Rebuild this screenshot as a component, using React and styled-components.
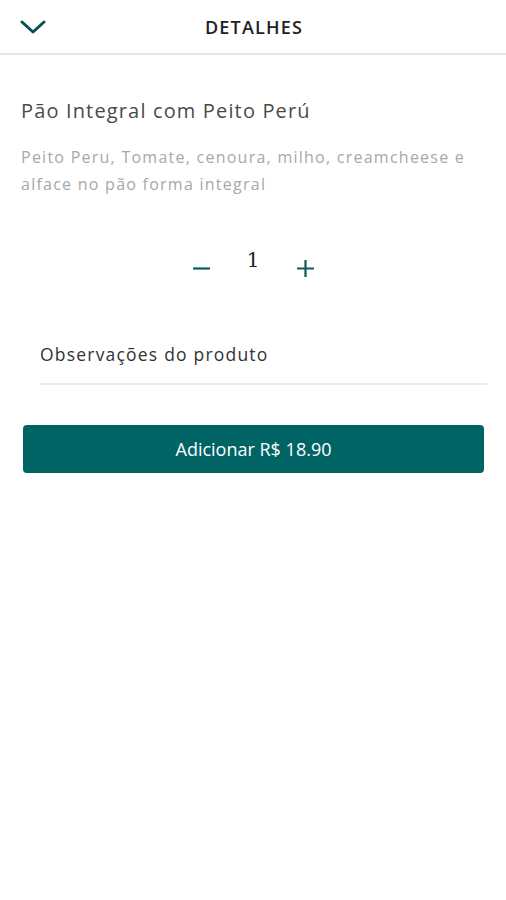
import React, { useState } from "react";
import styled, { createGlobalStyle } from "styled-components";

const GlobalStyle = createGlobalStyle`
  html, body {
    margin: 0;
    padding: 0;
    background: #ffffff;
    font-family: "Open Sans", "Noto Sans", sans-serif;
  }
`;

const Page = styled.div`
  width: 506px;
  min-height: 900px;
  background: #ffffff;
`;

const Header = styled.header`
  position: relative;
  height: 53px;
  display: flex;
  align-items: center;
  justify-content: center;
  border-bottom: 2px solid #e6e6e6;
`;

const BackButton = styled.button`
  position: absolute;
  left: 18px;
  top: 16px;
  width: 30px;
  height: 22px;
  padding: 0;
  border: none;
  background: transparent;
  display: flex;
  align-items: center;
  justify-content: center;
`;

const HeaderTitle = styled.h1`
  margin: 0 0 0 2px;
  font-size: 18px;
  font-weight: 600;
  color: #222222;
  letter-spacing: 1.2px;
`;

const Content = styled.main`
  padding: 40px 21px 0;
`;

const ProductName = styled.h2`
  margin: 0;
  font-size: 20px;
  font-weight: 400;
  color: #4a4a4a;
  line-height: 32px;
  letter-spacing: 1.15px;
`;

const Description = styled.p`
  margin: 17px 0 0;
  font-size: 16px;
  color: #a8a8a8;
  line-height: 27px;
  letter-spacing: 1.25px;
`;

const Counter = styled.div`
  display: flex;
  justify-content: center;
  align-items: center;
  gap: 35px;
  margin-top: 44px;
`;

const StepButton = styled.button`
  border: none;
  background: transparent;
  padding: 0;
  width: 20px;
  height: 20px;
  display: flex;
  align-items: center;
  justify-content: center;
  margin-top: 16px;
`;

const Quantity = styled.span`
  font-family: "DejaVu Serif", serif;
  font-size: 20px;
  color: #222222;
  width: 14px;
  text-align: center;
`;

const NotesField = styled.div`
  margin: 64px 0 0 19px;
  width: 447px;
  border-bottom: 2px solid #ececec;
  padding-bottom: 17px;
`;

const NotesLabel = styled.span`
  font-size: 17.5px;
  color: #333333;
  letter-spacing: 1.2px;
`;

const AddButton = styled.button`
  margin: 40px 0 0 2px;
  width: 461px;
  height: 48px;
  border: none;
  border-radius: 4px;
  background: #006464;
  color: #ffffff;
  font-family: "Open Sans", sans-serif;
  font-size: 18px;
  letter-spacing: 0;
`;

const teal = "#0b4f54";

export default function App() {
  const [qty, setQty] = useState(1);
  const price = 18.9 * qty;

  return (
    <Page>
      <GlobalStyle />
      <Header>
        <BackButton aria-label="Voltar">
          <svg width="26" height="14" viewBox="0 0 26 14">
            <path d="M2 2 L13 12 L24 2" fill="none" stroke={teal} strokeWidth="3" strokeLinecap="round" strokeLinejoin="round" />
          </svg>
        </BackButton>
        <HeaderTitle>DETALHES</HeaderTitle>
      </Header>
      <Content>
        <ProductName>Pão Integral com Peito Perú</ProductName>
        <Description>
          Peito Peru, Tomate, cenoura, milho, creamcheese e alface no pão forma integral
        </Description>
        <Counter>
          <StepButton aria-label="Diminuir" onClick={() => setQty((q) => Math.max(1, q - 1))}>
            <svg width="19" height="19" viewBox="0 0 18 18">
              <path d="M1 9 H17" stroke="#0d5a5e" strokeWidth="2.1" />
            </svg>
          </StepButton>
          <Quantity>{qty}</Quantity>
          <StepButton aria-label="Aumentar" onClick={() => setQty((q) => q + 1)}>
            <svg width="19" height="19" viewBox="0 0 18 18">
              <path d="M1 9 H17 M9 1 V17" stroke="#0d5a5e" strokeWidth="2.1" />
            </svg>
          </StepButton>
        </Counter>
        <NotesField>
          <NotesLabel>Observações do produto</NotesLabel>
        </NotesField>
        <AddButton>Adicionar R$ {price.toFixed(2)}</AddButton>
      </Content>
    </Page>
  );
}
